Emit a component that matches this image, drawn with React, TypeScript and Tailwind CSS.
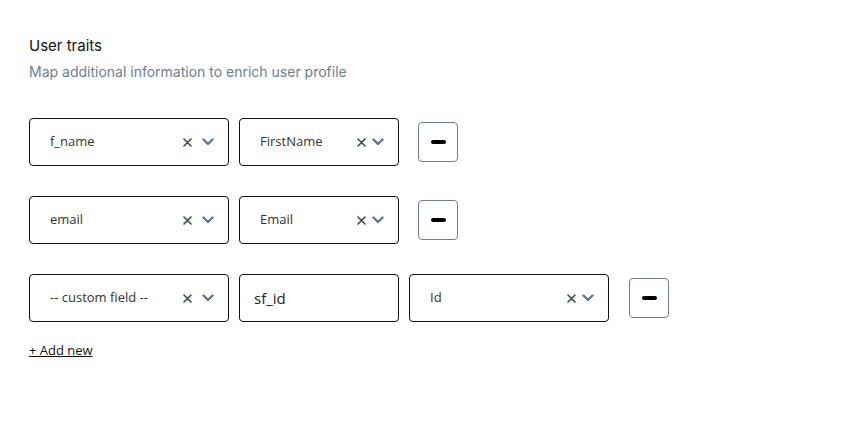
import React from 'react';

const Chevron = () => (
  <svg width="12" height="8" viewBox="0 0 12 8" className="text-[#5f7691]">
    <path d="M1.5 1.5 L6 6 L10.5 1.5" fill="none" stroke="currentColor" strokeWidth="2.4" strokeLinecap="round" strokeLinejoin="round" />
  </svg>
);

const Cross = () => (
  <svg width="9" height="9" viewBox="0 0 9 9" className="text-[#3c4a5a]">
    <path d="M1 1 L8 8 M8 1 L1 8" fill="none" stroke="currentColor" strokeWidth="1.6" strokeLinecap="round" />
  </svg>
);

function SelectBox({ value, width, tight }: { value: string; width: string; tight?: boolean }) {
  return (
    <div className={`${width} h-12 border border-[#111] rounded-[4px] flex items-center pl-5 pr-[14px] bg-white`}>
      <span className="flex-1 text-[13px] text-[#333] truncate">{value}</span>
      <div className={`flex items-center ${tight ? 'gap-[6px]' : 'gap-[10px]'}`}>
        <Cross />
        <Chevron />
      </div>
    </div>
  );
}

function MinusButton() {
  return (
    <button className="w-10 h-10 border border-[#6b7f99] rounded-[4px] flex items-center justify-center bg-white">
      <span className="w-[15px] h-[4px] rounded-full bg-black" />
    </button>
  );
}

export default function App() {
  return (
    <div className="w-[855px] h-[431px] bg-white pl-[29px] pt-[36px]" style={{ fontFamily: '"Open Sans", "Noto Sans", sans-serif' }}>
      <h2 className="text-[15px] leading-5 text-[#111]" style={{ fontFamily: 'Inter, "Noto Sans", sans-serif' }}>User traits</h2>
      <p className="text-[14px] leading-5 text-[#6a7e96] mt-[6px]" style={{ fontFamily: 'Inter, "Noto Sans", sans-serif' }}>
        Map additional information to enrich user profile
      </p>

      <div className="flex flex-col gap-[30px] mt-[36px]">
        <div className="flex items-center">
          <SelectBox value="f_name" width="w-[200px]" />
          <div className="ml-[10px]"><SelectBox value="FirstName" width="w-[160px]" tight /></div>
          <div className="ml-[19px]"><MinusButton /></div>
        </div>
        <div className="flex items-center">
          <SelectBox value="email" width="w-[200px]" />
          <div className="ml-[10px]"><SelectBox value="Email" width="w-[160px]" tight /></div>
          <div className="ml-[19px]"><MinusButton /></div>
        </div>
        <div className="flex items-center">
          <SelectBox value="-- custom field --" width="w-[200px]" />
          <input
            readOnly
            value="sf_id"
            className="ml-[10px] w-[160px] h-12 border border-[#111] rounded-[4px] px-[14px] text-[15px] text-[#222] outline-none"
          />
          <div className="ml-[10px]"><SelectBox value="Id" width="w-[200px]" tight /></div>
          <div className="ml-[20px]"><MinusButton /></div>
        </div>
      </div>

      <a className="inline-block mt-[19px] text-[13px] text-[#111] underline">+ Add new</a>
    </div>
  );
}
